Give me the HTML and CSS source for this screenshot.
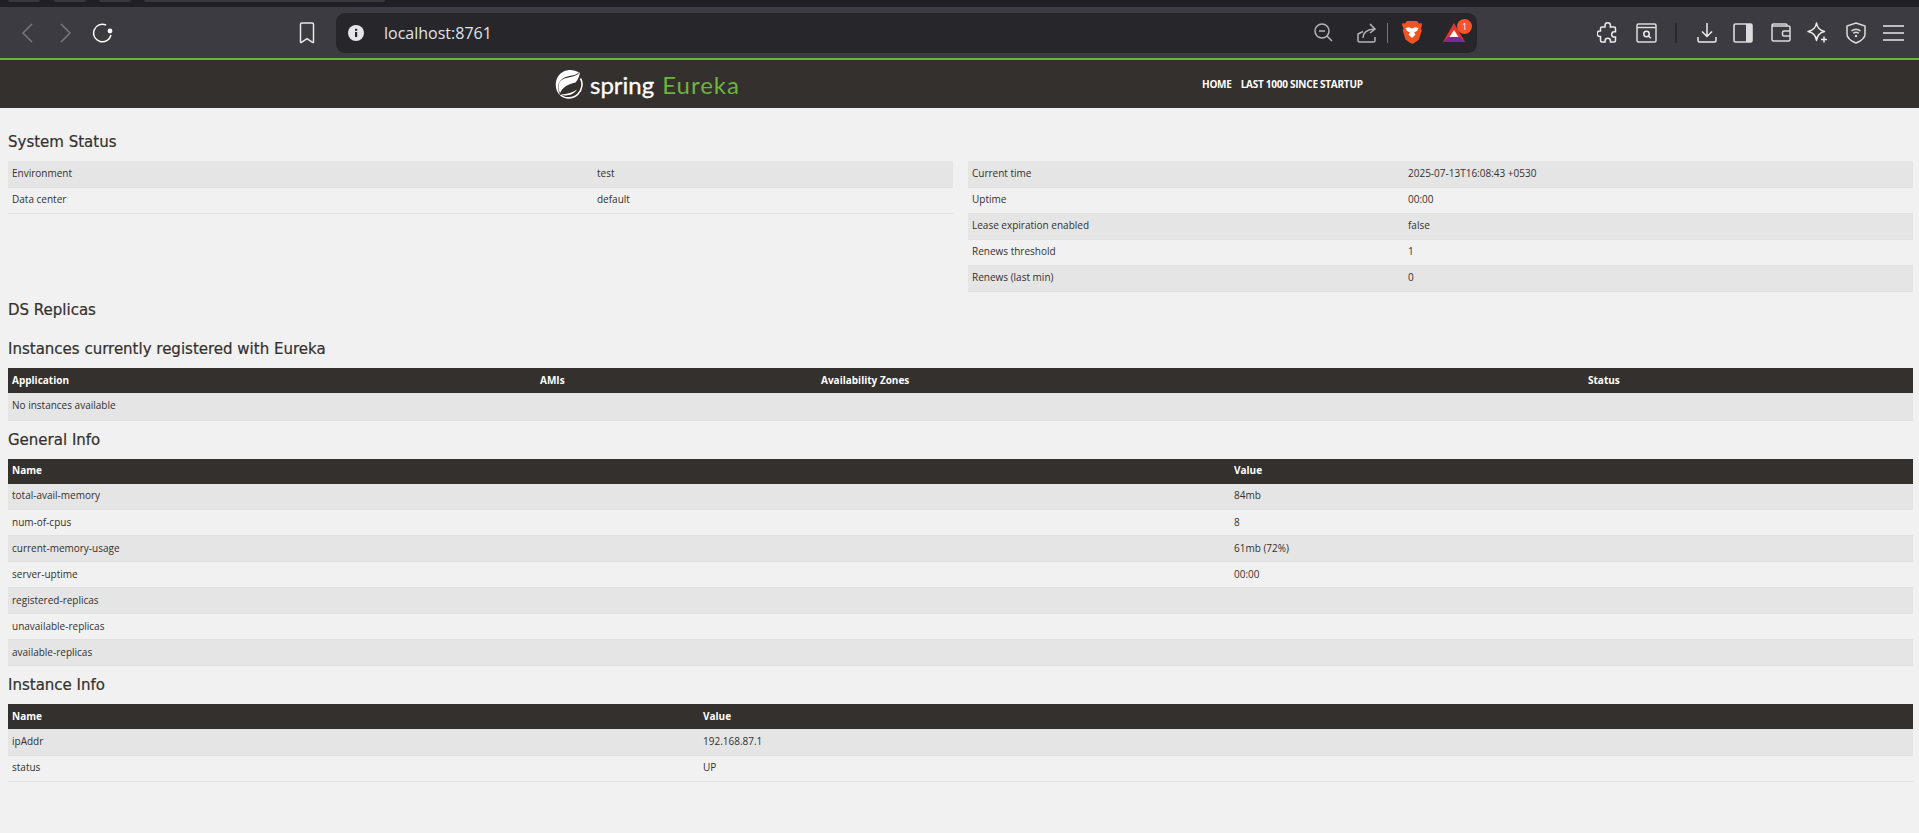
FILE: index.html
```html
<!DOCTYPE html>
<html lang="en">

<head>
    <meta charset="UTF-8">
    <title>Eureka</title>
    <link rel="stylesheet" href="styles.css">
</head>

<body>
    <!-- browser window -->
    <div class="tabstrip">
        <span class="tab tab-a"></span>
        <span class="tab tab-b"></span>
        <span class="tab tab-c"></span>
        <span class="tab tab-d"></span>
    </div>

    <div class="toolbar">
        <svg class="icon back" width="14" height="20" viewBox="0 0 14 20"><path d="M12 1 3 10l9 9" stroke="#77777c" /></svg>
        <svg class="icon forward" width="14" height="20" viewBox="0 0 14 20"><path d="M2 1l9 9-9 9" stroke="#77777c" /></svg>
        <svg class="icon reload" width="22" height="20" viewBox="0 0 22 20"><path d="M14 2A8.8 8.8 0 1 0 19 12" stroke="#fff" stroke-width="1.8" /><circle cx="18" cy="8" r="2.4" fill="#fff" /></svg>
        <svg class="icon bookmark" width="16" height="22" viewBox="0 0 16 22"><path d="M2.8 1h10.4q1.3 0 1.3 1.3V20q0 1-1 .4L8 16.6l-5.500 3.800q-1 .6-1-.4V2.300Q1.500 1 2.800 1z" stroke="#e8e8ea" stroke-width="1.400" /></svg>

        <div class="urlbar">
            <svg class="info" width="16" height="16" viewBox="0 0 16 16"><circle cx="8" cy="8" r="8" fill="#e6e6e8" /><rect x="7" y="7" width="2.200" height="5" fill="#26262b" /><rect x="7" y="3.800" width="2.200" height="2" fill="#26262b" /></svg>
            <span class="url">localhost:8761</span>
            <svg class="icon zoom" width="19" height="19" viewBox="0 0 19 19"><circle cx="8" cy="8" r="7" stroke="#b5b5b8" stroke-width="1.500" /><path d="M5 8h6M13 13l5 5" stroke="#b5b5b8" stroke-width="1.500" /></svg>
            <svg class="icon share" width="19" height="20" viewBox="0 0 19 20"><path d="M6 8.500 1 11v6.500q0 1.500 1.500 1.500h14q1.500 0 1.500-1.500V14" stroke="#b5b5b8" stroke-width="1.300" /><path d="M6 15q0-8 11-9M13 1l5 5-5 4" stroke="#b5b5b8" stroke-width="1.300" /></svg>
            <span class="url-sep"></span>
            <svg class="brave" width="20" height="23" viewBox="0 0 20 23">
                <path d="M5 0h10l2 2.500 2.500-.5.500 2-1 3.500.8 2-2.800 9-4 3-2.500 1.500L7.500 21.500l-4-3-2.800-9 .8-2L0 4l.5-2L3 2.500z" fill="#f1521e" />
                <path d="M3.500 7 7 6.300l3 1.200 3-1.200 3.500.7-1.500 3-3 1.500 1.500 2-3.500 3.500-3.500-3.500 1.500-2-3-1.500z" fill="#fff" />
            </svg>
            <svg class="bat" width="22" height="20" viewBox="0 0 22 20">
                <path d="M11 0 22 19H0z" fill="#e2362a" />
                <path d="M0 19h22L17 14H5z" fill="#7b2a94" />
                <path d="M11 7l4.500 7h-9z" fill="#fff" />
            </svg>
            <span class="badge">1</span>
        </div>

        <svg class="icon puzzle" width="20" height="21" viewBox="0 0 20 21"><path d="M8 3.500a2.700 2.700 0 0 1 5.400 0V5H17q1.500 0 1.500 1.500v3.300h-1.200a2.600 2.600 0 0 0 0 5.200h1.200v3.500q0 1.500-1.500 1.500h-3.500v-1a2.700 2.700 0 0 0-5.400 0v1H5q-1.500 0-1.500-1.500V14.500H2.800a2.700 2.700 0 0 1 0-5.400h.7V6.500Q3.500 5 5 5h3z" stroke="#ececee" stroke-width="1.500" /></svg>
        <svg class="icon find" width="21" height="20" viewBox="0 0 21 20"><rect x="1" y="1" width="19" height="18" rx="1.500" stroke="#dcdcde" stroke-width="1.500" /><path d="M1 4.500h19" stroke="#dcdcde" stroke-width="1.500" /><circle cx="10.500" cy="11" r="2.700" stroke="#ececee" stroke-width="1.500" /><path d="M12.500 13l2.300 2.300" stroke="#ececee" stroke-width="1.500" /></svg>
        <span class="tool-sep"></span>
        <svg class="icon download" width="20" height="20" viewBox="0 0 20 20"><path d="M10 0v13M5 8.500l5 5 5-5M1 14v3.500Q1 19 2.500 19h15q1.500 0 1.500-1.500V14" stroke="#ececee" stroke-width="1.500" /></svg>
        <svg class="icon sidebar" width="20" height="20" viewBox="0 0 20 20"><rect x="1" y="1" width="18" height="18" rx="1.500" stroke="#dcdcde" stroke-width="1.600" /><rect x="13" y="1" width="6" height="18" fill="#dcdcde" /></svg>
        <svg class="icon wallet" width="20" height="19" viewBox="0 0 20 19"><path d="M16 3V2.500Q16 1 14.500 1h-12Q1 1 1 3v13.500Q1 18 2.500 18h15q1.500 0 1.500-1.500v-12Q19 3 17.500 3H1" stroke="#dcdcde" stroke-width="1.500" /><path d="M19 8h-6q-1.500 0-1.500 1.500v2q0 1.500 1.500 1.500h6" stroke="#dcdcde" stroke-width="1.500" /></svg>
        <svg class="icon spark" width="21" height="21" viewBox="0 0 21 21"><path d="M9.500 1q1 7 8 8.500-7 1.500-8 9-1-7.500-8.500-9Q8.500 8 9.500 1z" stroke="#ececee" stroke-width="1.500" stroke-linejoin="round" /><path d="M17 14.500v6M14 17.500h6" stroke="#ececee" stroke-width="1.800" /></svg>
        <svg class="icon shield" width="20" height="22" viewBox="0 0 20 22"><path d="M10 1l9 3v8q0 5.500-9 9-9-3.500-9-9V4z" stroke="#dcdcde" stroke-width="1.500" /><path d="M5.500 9q4.500-3.500 9 0M7.300 11.300q2.700-2 5.400 0" stroke="#dcdcde" stroke-width="1.400" /><circle cx="10" cy="14" r="1.200" fill="#dcdcde" /></svg>
        <svg class="icon menu" width="21" height="18" viewBox="0 0 21 18"><path d="M0 2h21M0 9h21M0 16h21" stroke="#e8e8ea" stroke-width="1.800" /></svg>
    </div>

    <!-- eureka page -->
    <nav class="navbar">
        <a class="brand">
            <svg class="leaf" width="28" height="29" viewBox="0 0 28 29">
                <path d="M25 2C21 7 15 7 9.500 8.500 3.500 10.500 2 16 5 23 8 17 13 14 20.500 12.500 23 9.500 24.500 6 25 2z" fill="#fff" />
                <path d="M3 6.500C-1 13 .5 22 5.500 25.500 3 21 .5 12 9.500 7.500 15 5 20 6 24 2.500 18-1.500 8-1 3 6.500z" fill="#fff" />
                <path d="M5.500 25c4.500 4 13 4 17.500-1 4.500-4.500 5-11 2.500-15.500" fill="none" stroke="#fff" stroke-width="1.600" />
                <path d="M6 24.500c5 2 12 1 16-5-4 3-10 4.500-16 5z" fill="#fff" />
            </svg>
            <span class="brand-spring">spring</span>
            <span class="brand-eureka">Eureka</span>
        </a>
        <ul class="nav-links">
            <li>HOME</li>
            <li>LAST 1000 SINCE STARTUP</li>
        </ul>
    </nav>

    <main class="content">
        <h2>System Status</h2>
        <div class="status-row">
            <table>
                <colgroup><col class="c-env"><col></colgroup>
                <tbody>
                    <tr><td>Environment</td><td>test</td></tr>
                    <tr><td>Data center</td><td>default</td></tr>
                </tbody>
            </table>
            <table>
                <colgroup><col class="c-time"><col></colgroup>
                <tbody>
                    <tr><td>Current time</td><td>2025-07-13T16:08:43 +0530</td></tr>
                    <tr><td>Uptime</td><td>00:00</td></tr>
                    <tr><td>Lease expiration enabled</td><td>false</td></tr>
                    <tr><td>Renews threshold</td><td>1</td></tr>
                    <tr><td>Renews (last min)</td><td>0</td></tr>
                </tbody>
            </table>
        </div>

        <h2>DS Replicas</h2>
        <div class="replicas"></div>

        <h2>Instances currently registered with Eureka</h2>
        <table>
            <colgroup><col class="c-app"><col class="c-ami"><col class="c-zone"><col></colgroup>
            <thead>
                <tr><th>Application</th><th>AMIs</th><th>Availability Zones</th><th>Status</th></tr>
            </thead>
            <tbody>
                <tr class="tall"><td colspan="4">No instances available</td></tr>
            </tbody>
        </table>

        <h2>General Info</h2>
        <table>
            <colgroup><col class="c-general"><col></colgroup>
            <thead>
                <tr><th>Name</th><th>Value</th></tr>
            </thead>
            <tbody>
                <tr><td>total-avail-memory</td><td>84mb</td></tr>
                <tr><td>num-of-cpus</td><td>8</td></tr>
                <tr><td>current-memory-usage</td><td>61mb (72%)</td></tr>
                <tr><td>server-uptime</td><td>00:00</td></tr>
                <tr><td>registered-replicas</td><td></td></tr>
                <tr><td>unavailable-replicas</td><td></td></tr>
                <tr><td>available-replicas</td><td></td></tr>
            </tbody>
        </table>

        <h2>Instance Info</h2>
        <table>
            <colgroup><col class="c-instance"><col></colgroup>
            <thead>
                <tr><th>Name</th><th>Value</th></tr>
            </thead>
            <tbody>
                <tr><td>ipAddr</td><td>192.168.87.1</td></tr>
                <tr><td>status</td><td>UP</td></tr>
            </tbody>
        </table>
    </main>
</body>

</html>
```

FILE: styles.css
```css
* {
    box-sizing: border-box;
}

body {
    margin: 0;
    height: 833px;
    overflow: hidden;
    background: #f1f1f1;
    color: #34302d;
    font-family: "Open Sans", sans-serif;
}

/* browser window */
.tabstrip {
    display: flex;
    height: 7px;
    background: #1f1f25;
}

.tab {
    height: 2px;
    background: #38383e;
    border-radius: 0 0 5px 5px;
}

.tab-a {
    width: 32px;
    margin-left: 8px;
}

.tab-b {
    width: 32px;
    margin-left: 14px;
}

.tab-c {
    width: 32px;
    margin-left: 13px;
}

.tab-d {
    width: 241px;
    margin-left: 13px;
}

.toolbar {
    display: flex;
    align-items: center;
    height: 51px;
    background: #3b3b41;
}

.toolbar svg {
    flex: none;
    display: block;
}

.icon {
    fill: none;
}

.icon path {
    stroke-width: 1.500;
}

.back {
    margin-left: 20px;
}

.forward {
    margin-left: 25px;
}

.reload {
    margin-left: 19px;
}

.bookmark {
    margin-left: 185px;
}

.urlbar {
    display: flex;
    align-items: center;
    position: relative;
    width: 1141px;
    height: 40px;
    margin-left: 21px;
    background: #26262b;
    border-radius: 9px;
}

.info {
    margin-left: 12px;
}

.url {
    margin-left: 20px;
    width: 930px;
    color: #e0e3ea;
    font-size: 16px;
}

.share {
    margin-left: 24px;
}

.url-sep {
    width: 1px;
    height: 20px;
    margin-left: 11px;
    background: #77777c;
}

.brave {
    margin-left: 14px;
}

.bat {
    margin-left: 21px;
}

.badge {
    position: absolute;
    right: 5px;
    top: 6px;
    width: 15px;
    height: 15px;
    border-radius: 50%;
    background: #f8532b;
    color: #fff;
    font-size: 9px;
    line-height: 15px;
    text-align: center;
}

.puzzle {
    margin-left: 120px;
}

.find {
    margin-left: 19px;
}

.tool-sep {
    width: 2px;
    height: 20px;
    margin-left: 18px;
    background: #29292e;
}

.download {
    margin-left: 20px;
}

.sidebar {
    margin-left: 16px;
}

.wallet {
    margin-left: 18px;
}

.spark {
    margin-left: 16px;
}

.shield {
    margin-left: 18px;
}

.menu {
    margin-left: 16.500px;
}

/* eureka page */
.navbar {
    display: flex;
    align-items: center;
    height: 50px;
    background: #34302d;
    border-top: 2px solid #6db33f;
}

.brand {
    display: flex;
    align-items: center;
    margin-left: 555px;
    width: 647px;
    font-family: Lato, sans-serif;
    font-size: 24px;
}

.brand-spring {
    margin-left: 7px;
    color: #fff;
    -webkit-text-stroke: .3px #fff;
}

.brand-eureka {
    margin-left: 8px;
    color: #6db33f;
    letter-spacing: 1px;
}

.nav-links {
    display: flex;
    gap: 9px;
    margin: 0;
    padding: 0;
    list-style: none;
    color: #fff;
    font-size: 10px;
    font-weight: 700;
    letter-spacing: -.25px;
}

.content {
    padding: 24px 6px 0 8px;
}

h2 {
    height: 20px;
    margin: 9px 0;
    font-family: "DejaVu Sans", sans-serif;
    font-size: 15px;
    font-weight: 400;
    line-height: 20px;
    -webkit-text-stroke: .2px #34302d;
}

.content > h2:first-child {
    margin-top: 0;
}

.status-row {
    display: flex;
    gap: 15px;
    height: 130px;
}

.replicas {
    height: 1px;
}

table {
    width: 100%;
    border-collapse: collapse;
    table-layout: fixed;
    align-self: flex-start;
    font-size: 10px;
}

td,
th {
    padding: 0 4px 2px;
    text-align: left;
    vertical-align: middle;
}

tbody tr {
    height: 26px;
    border-bottom: 1px solid #e1e1e4;
}

tbody tr:nth-child(odd) {
    background: #e5e5e5;
}

tbody tr:nth-child(even) {
    background: #f1f1f1;
}

thead tr {
    height: 25px;
    background: #34302d;
    color: #fff;
}

tbody tr.tall {
    height: 27px;
}

th {
    font-weight: 700;
}

.c-env {
    width: 585px;
}

.c-time {
    width: 436px;
}

.c-app {
    width: 528px;
}

.c-ami {
    width: 281px;
}

.c-zone {
    width: 767px;
}

.c-general {
    width: 1222px;
}

.c-instance {
    width: 691px;
}
```
